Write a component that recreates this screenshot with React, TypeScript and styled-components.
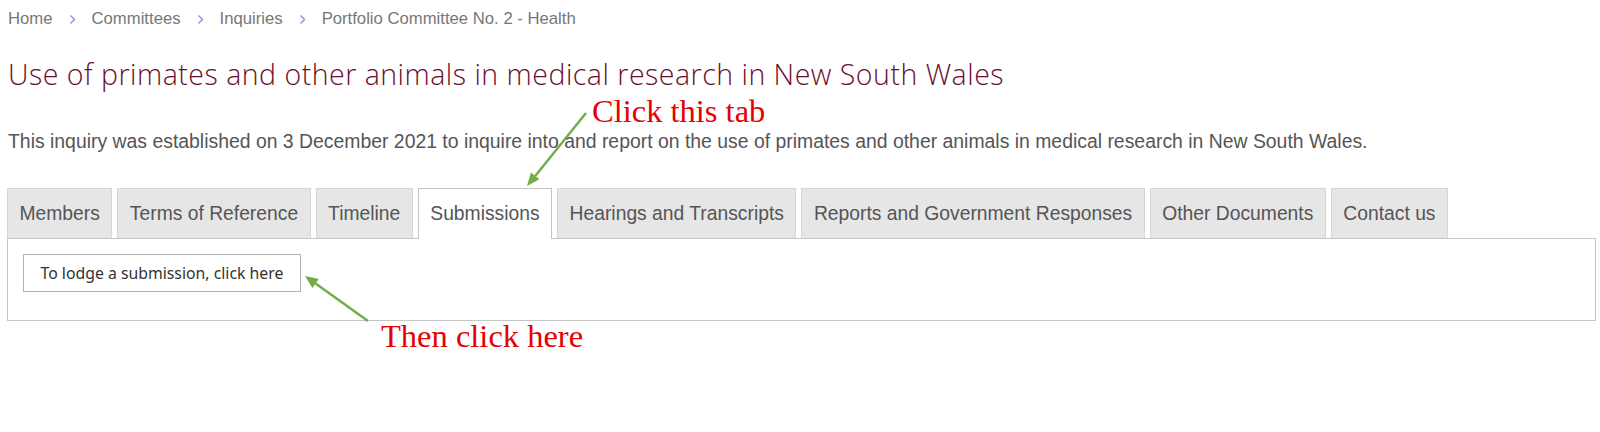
import styled, { createGlobalStyle } from "styled-components";

const GlobalStyle = createGlobalStyle`
  html, body {
    margin: 0;
    padding: 0;
    background: #fff;
  }
  body {
    font-family: "Liberation Sans", Arial, sans-serif;
  }
`;

const Page = styled.div`
  position: relative;
  width: 1600px;
  height: 432px;
  box-sizing: border-box;
  padding: 9px 4px 0 7px;
  overflow: hidden;
`;

const Breadcrumb = styled.nav`
  display: flex;
  align-items: center;
  gap: 16px;
  padding-left: 1px;
  font-size: 16.7px;
  line-height: 20px;
  color: #777;
`;

const Crumb = styled.a`
  color: inherit;
  text-decoration: none;
`;

const Title = styled.h1`
  margin: 27px 0 0 1px;
  font-family: "Open Sans", "Liberation Sans", sans-serif;
  font-weight: 300;
  font-size: 28.5px;
  letter-spacing: 0.5px;
  line-height: 36px;
  color: #6b0f2e;
`;

const Intro = styled.p`
  margin: 37px 0 0 1px;
  font-size: 19.4px;
  line-height: 24px;
  color: #555;
`;

const TabList = styled.div`
  display: flex;
  align-items: flex-end;
  gap: 5px;
  margin-top: 35px;
`;

const Tab = styled.button<{ $active?: boolean }>`
  position: relative;
  z-index: ${(p) => (p.$active ? 1 : 0)};
  box-sizing: border-box;
  height: ${(p) => (p.$active ? 51 : 50)}px;
  margin-bottom: ${(p) => (p.$active ? -1 : 0)}px;
  padding: 0 11.5px ${(p) => (p.$active ? 1 : 0)}px;
  border: 1px solid ${(p) => (p.$active ? "#c4c4c4" : "#d6d6d6")};
  border-bottom: none;
  background: ${(p) => (p.$active ? "#fff" : "#e6e6e6")};
  font-family: "Liberation Sans", Arial, sans-serif;
  font-size: 19.3px;
  color: #555;
  cursor: pointer;
`;

const Panel = styled.div`
  border: 1px solid #c6c6c6;
  padding: 15px 15px 28px;
`;

const LodgeButton = styled.button`
  box-sizing: border-box;
  height: 38px;
  padding: 0 16.5px;
  border: 1px solid #b3b3b3;
  background: #fff;
  font-family: "Noto Sans", "Open Sans", sans-serif;
  font-size: 15.8px;
  color: #333;
  cursor: pointer;
`;

const Overlay = styled.svg`
  position: absolute;
  left: 0;
  top: 0;
  pointer-events: none;
`;

const Note = styled.span<{ $x: number; $y: number }>`
  position: absolute;
  left: ${(p) => p.$x}px;
  top: ${(p) => p.$y}px;
  font-family: "Liberation Serif", "Times New Roman", serif;
  font-size: 32.5px;
  line-height: 32.5px;
  color: #e60000;
  white-space: nowrap;
`;

const Chevron = () => (
  <svg width="7" height="11" viewBox="0 0 7 11">
    <polyline
      points="1.5,1.5 5.5,5.5 1.5,9.5"
      fill="none"
      stroke="#8ea2cc"
      strokeWidth="1.6"
    />
  </svg>
);

const Arrow = ({ x1, y1, x2, y2 }: { x1: number; y1: number; x2: number; y2: number }) => {
  const a = Math.atan2(y2 - y1, x2 - x1);
  const len = 13;
  const half = 5.5;
  const bx = x2 - len * Math.cos(a);
  const by = y2 - len * Math.sin(a);
  const px = -Math.sin(a) * half;
  const py = Math.cos(a) * half;
  const head = `${x2},${y2} ${bx + px},${by + py} ${bx - px},${by - py}`;
  return (
    <g>
      <line x1={x1} y1={y1} x2={bx} y2={by} stroke="#70ad47" strokeWidth="2.4" />
      <polygon points={head} fill="#70ad47" />
    </g>
  );
};

const crumbs = ["Home", "Committees", "Inquiries", "Portfolio Committee No. 2 - Health"];

const tabs = [
  "Members",
  "Terms of Reference",
  "Timeline",
  "Submissions",
  "Hearings and Transcripts",
  "Reports and Government Responses",
  "Other Documents",
  "Contact us",
];

export default function App() {
  return (
    <Page>
      <GlobalStyle />
      <Breadcrumb>
        {crumbs.map((c, i) => (
          <>
            {i > 0 && <Chevron key={`s${i}`} />}
            <Crumb key={c} href="#">
              {c}
            </Crumb>
          </>
        ))}
      </Breadcrumb>
      <Title>Use of primates and other animals in medical research in New South Wales</Title>
      <Intro>
        This inquiry was established on 3 December 2021 to inquire into and report on the use of
        primates and other animals in medical research in New South Wales.
      </Intro>
      <TabList>
        {tabs.map((t) => (
          <Tab key={t} $active={t === "Submissions"}>
            {t}
          </Tab>
        ))}
      </TabList>
      <Panel>
        <LodgeButton>To lodge a submission, click here</LodgeButton>
      </Panel>

      <Overlay width="1600" height="432" viewBox="0 0 1600 432">
        <Arrow x1={586} y1={113} x2={527} y2={186} />
        <Arrow x1={368} y1={321} x2={305} y2={276} />
      </Overlay>
      <Note $x={592} $y={95}>Click this tab</Note>
      <Note $x={381} $y={320}>Then click here</Note>
    </Page>
  );
}
